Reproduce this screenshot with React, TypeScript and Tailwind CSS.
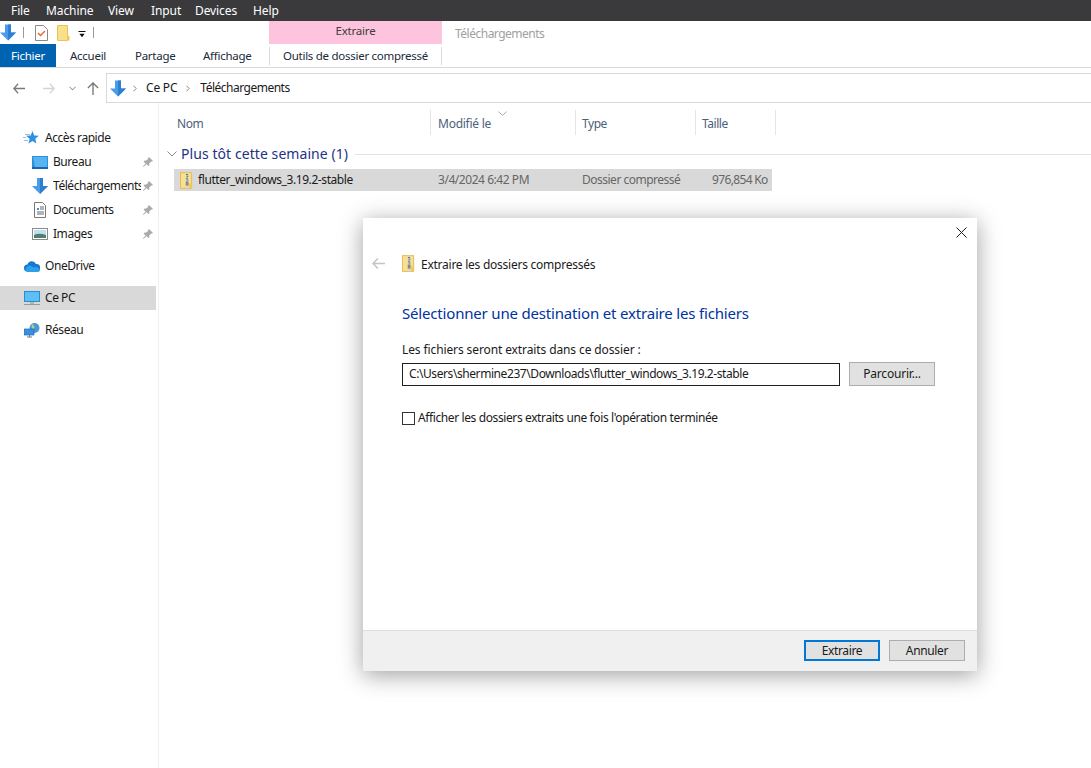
import React from "react";

const ArrowDown = ({ className = "" }: { className?: string }) => (
  <svg viewBox="0 0 16 16" className={className}>
    <path d="M5 0h6v8h5l-8 8-8-8h5z" fill="#4a9ce8" />
    <path d="M8 0h3v8h5l-8 8z" fill="#2f7fd0" />
  </svg>
);

const Zip = ({ className = "" }: { className?: string }) => (
  <svg viewBox="0 0 14 18" className={className}>
    <path d="M0.5 0.5h12v17h-12z" fill="#fbe08c" stroke="#e2b84a" />
    <path d="M10 12h3v5.5h-3z" fill="#f2c94c" />
    <rect x="6" y="0.5" width="3.5" height="17" fill="#d8d8d0" />
    <path d="M6.5 2h2v1h-2zM7 4h2v1H7zM6.5 6h2v1h-2zM7 8h2v1H7z" fill="#666" />
    <rect x="6.2" y="10" width="3" height="4.5" fill="#888" />
  </svg>
);

const Pin = () => (
  <svg viewBox="0 0 12 12" className="w-[12px] h-[12px]">
    <path d="M7 1l4 4-1 .6-.8-.2L7.2 7.6l.2 1.600-.9.8-2-2L1.500 11 1 10.500l2.600-3-2-2 .8-.9 1.600.2L6.200 2.800 6 2z" fill="#a9a9a9" />
  </svg>
);

const NavRow = ({
  icon,
  label,
  pin,
  indent,
  selected,
  mt,
}: {
  icon: React.ReactNode;
  label: string;
  pin?: boolean;
  indent?: boolean;
  selected?: boolean;
  mt?: boolean;
}) => (
  <div className={`h-[24px] w-[156px] flex items-center ${selected ? "bg-[#d9d9d9]" : ""} ${mt ? "mt-[8px]" : ""} ${indent ? "pl-[32px]" : "pl-[24px]"}`}>
    <span className="w-[16px] h-[16px] flex items-center justify-center shrink-0">{icon}</span>
    <span className={`ml-[5px] text-[12px] text-[#1a1a1a] whitespace-nowrap ${indent ? "w-[88px] [clip-path:inset(0)]" : ""}`}>{label}</span>
    {pin && <span className="ml-auto mr-[2px] flex"><Pin /></span>}
  </div>
);

const HeaderCell = ({ label, w, chevron }: { label: string; w: string; chevron?: boolean }) => (
  <div className={`${w} h-[25px] border-r border-[#e5e5e5] flex items-center text-[12px] text-[#4c607a] relative pt-[2px]`}>
    {chevron && (
      <svg viewBox="0 0 10 5" className="absolute left-[67px] top-[1px] w-[9px] h-[5px]">
        <path d="M0.500 0.500L5 4.500 9.500 0.500" fill="none" stroke="#9aa3ad" />
      </svg>
    )}
    {label}
  </div>
);

export default function App() {
  return (
    <div className="relative w-[1091px] h-[768px] overflow-hidden bg-white font-['Noto_Sans','Open_Sans',sans-serif] tracking-[-0.45px]">
      {/* VM menu */}
      <div className="h-[21px] bg-[#3a3a3c] flex items-center pl-[11px] text-[12px] text-white tracking-[-0.1px]">
        <span className="w-[35px]">File</span>
        <span className="w-[62px]">Machine</span>
        <span className="w-[43px]">View</span>
        <span className="w-[44px]">Input</span>
        <span className="w-[58px]">Devices</span>
        <span>Help</span>
      </div>

      {/* Quick access */}
      <div className="h-[23px] flex items-center">
        <div className="w-[269px] flex items-center h-full">
          <ArrowDown className="w-[16px] h-[17px] ml-[0px]" />
          <span className="ml-[7px] w-px h-[11px] bg-[#9a9a9a]" />
          <svg viewBox="0 0 13 16" className="ml-[11px] w-[13px] h-[16px]">
            <path d="M.5.500h8l4 4v11H.5z" fill="#fff" stroke="#8a8a8a" />
            <path d="M3 8l2.500 2.500L10 6" fill="none" stroke="#e8622c" strokeWidth="1.300" />
          </svg>
          <svg viewBox="0 0 13 16" className="ml-[9px] w-[13px] h-[16px]">
            <path d="M.5.500h10v15H.5z" fill="#fbe08c" stroke="#e8c35a" />
            <path d="M10.500 11h2v4.500h-2z" fill="#f2c94c" />
          </svg>
          <svg viewBox="0 0 8 8" className="ml-[8px] mt-[3px] w-[8px] h-[7px]">
            <path d="M0 0h8v1H0zM1 3h6L4 7z" fill="#111" />
          </svg>
          <span className="ml-[7px] w-px h-[11px] bg-[#9a9a9a]" />
        </div>
        <div className="w-[173px] h-full bg-[#fec4dd] flex justify-center pt-[2px] text-[11.500px] leading-[16px] text-[#3c3c3c] tracking-[-0.2px]">Extraire</div>
        <div className="ml-[13px] text-[12px] text-[#a0a0a0] mt-[2px] tracking-[-0.5px]">Téléchargements</div>
      </div>

      {/* Ribbon tabs */}
      <div className="h-[24px] flex border-b border-[#dadada] text-[11.500px] text-[#202a3a] tracking-[-0.27px]">
        <div className="w-[56px] h-[23px] bg-[#0063b1] text-white flex items-center justify-center">Fichier</div>
        <div className="w-[213px] h-[23px] flex items-center">
          <span className="ml-[14px] w-[65px]">Accueil</span>
          <span className="w-[68px]">Partage</span>
          <span>Affichage</span>
        </div>
        <div className="w-[173px] h-[18px] border-x border-[#d9d9d9] pl-[13px] flex items-center mt-[3px]">
          <span>Outils de dossier compressé</span>
        </div>
      </div>

      {/* Nav row */}
      <div className="h-[35px] flex">
        <div className="w-[106px] flex items-center pt-[5px]">
          <svg viewBox="0 0 14 12" className="ml-[13px] w-[12px] h-[11px]">
            <path d="M6 .5L1 6l5 5.500M1.500 6H14" fill="none" stroke="#7a7a7a" strokeWidth="1.500" />
          </svg>
          <svg viewBox="0 0 14 12" className="ml-[18px] w-[12px] h-[11px]">
            <path d="M8 .5L13 6l-5 5.500M12.500 6H0" fill="none" stroke="#d4d4d4" strokeWidth="1.500" />
          </svg>
          <svg viewBox="0 0 8 5" className="ml-[14px] w-[7px] h-[5px]">
            <path d="M.5.500L4 4 7.500.500" fill="none" stroke="#9a9a9a" strokeWidth="1.200" />
          </svg>
          <svg viewBox="0 0 12 14" className="ml-[11px] w-[12px] h-[13px]">
            <path d="M.5 6.500L6 1l5.500 5.500M6 1.500V14" fill="none" stroke="#7a7a7a" strokeWidth="1.500" />
          </svg>
        </div>
        <div className="flex-1 h-[30px] mt-[5px] border-y border-l border-[#d9d9d9] flex items-center text-[12px] text-[#1a1a1a]">
          <ArrowDown className="ml-[3px] w-[16px] h-[17px]" />
          <svg viewBox="0 0 5 8" className="ml-[7px] w-[4px] h-[7px]">
            <path d="M.5.500L4 4 .5 7.500" fill="none" stroke="#808080" strokeWidth="1.200" />
          </svg>
          <span className="ml-[9px] tracking-[-0.2px]">Ce PC</span>
          <svg viewBox="0 0 5 8" className="ml-[9px] w-[4px] h-[7px]">
            <path d="M.5.500L4 4 .5 7.500" fill="none" stroke="#808080" strokeWidth="1.200" />
          </svg>
          <span className="ml-[10px] tracking-[-0.5px]">Téléchargements</span>
        </div>
      </div>

      {/* Main */}
      <div className="flex h-[665px]">
        <aside className="w-[159px] border-r border-[#f0f0f0] pt-[23px] shrink-0">
          <NavRow
            label="Accès rapide"
            icon={
              <svg viewBox="0 0 16 16" className="w-[16px] h-[16px] -ml-[2px]">
                <path d="M9.500 1l1.700 4.400 4.600.4-3.500 3 1.100 4.700L9.500 11l-4 2.500 1.100-4.700-3.500-3 4.600-.4z" fill="#2f8fe0" />
                <path d="M2 4.500h5M0 7.500h3M1 10.500h4" stroke="#8cc4f0" />
              </svg>
            }
          />
          <NavRow
            indent
            pin
            label="Bureau"
            icon={
              <svg viewBox="0 0 16 13" className="w-[16px] h-[13px]">
                <rect width="16" height="13" fill="#2a90e0" />
                <path d="M1 1h14v10H3z" fill="#58b4f0" />
                <rect y="11" width="16" height="2" fill="#1666b0" />
              </svg>
            }
          />
          <NavRow indent pin label="Téléchargements" icon={<ArrowDown className="w-[16px] h-[16px]" />} />
          <NavRow
            indent
            pin
            label="Documents"
            icon={
              <svg viewBox="0 0 12 16" className="w-[12px] h-[16px]">
                <path d="M.5.500h8l3 3v12H.5z" fill="#fff" stroke="#777" />
                <path d="M3 6h2v2H3z" fill="#3a8ee6" />
                <path d="M6 5h4M6 7h4M3 10h7M3 12h7" stroke="#666" />
              </svg>
            }
          />
          <NavRow
            indent
            pin
            label="Images"
            icon={
              <svg viewBox="0 0 16 12" className="w-[16px] h-[12px]">
                <rect x=".5" y=".5" width="15" height="11" fill="#fff" stroke="#8a8a8a" />
                <rect x="2" y="2" width="12" height="5" fill="#bfe0f2" />
                <path d="M2 7c4-2 8-1 12 0v3H2z" fill="#4f7f6f" />
              </svg>
            }
          />
          <NavRow
            mt
            label="OneDrive"
            icon={
              <svg viewBox="0 0 16 11" className="w-[16px] h-[11px]">
                <path d="M3.500 10.500a3.500 3.500 0 010-7A4.500 4.500 0 0112 3a3.500 3.500 0 011 7.500z" fill="#1578d0" />
                <path d="M3 11a3 3 0 010-5c1.500-2 3.500-2 5-.5l2 1c2-1 5 0 6 2.500 0 1-1 2-2.500 2z" fill="#2ea0ea" />
              </svg>
            }
          />
          <NavRow
            mt
            selected
            label="Ce PC"
            icon={
              <svg viewBox="0 0 16 15" className="w-[16px] h-[15px]">
                <rect x=".5" y=".5" width="15" height="10" fill="#5cc0f5" stroke="#2a8cd0" />
                <rect x="6" y="11" width="4" height="2" fill="#b5b5b5" />
                <rect y="13" width="16" height="1" fill="#9a9a9a" />
              </svg>
            }
          />
          <NavRow
            mt
            label="Réseau"
            icon={
              <svg viewBox="0 0 16 15" className="w-[16px] h-[15px]">
                <circle cx="10.500" cy="5" r="5" fill="#4a9ad6" />
                <path d="M8 1c2 1 3 3 2 5-2 0-3-2-2-5z" fill="#a8d68a" />
                <rect x="0" y="6" width="10" height="6" fill="#3a8ee0" stroke="#2a6ea8" strokeWidth=".7" />
                <path d="M3 14h5M5.500 12v2" stroke="#777" />
              </svg>
            }
          />
        </aside>

        <main className="flex-1 pt-[7px]">
          <div className="flex">
            <HeaderCell label="Nom" w="w-[272px] pl-[18px]" />
            <HeaderCell label="Modifié le" w="w-[145px] pl-[7px] tracking-[-0.25px]" chevron />
            <HeaderCell label="Type" w="w-[120px] pl-[6px]" />
            <HeaderCell label="Taille" w="w-[80px] pl-[6px]" />
          </div>
          <div className="h-[24px] mt-[7px] flex items-center pl-[8px]">
            <svg viewBox="0 0 10 6" className="w-[10px] h-[6px]">
              <path d="M.5.500L5 5 9.500.500" fill="none" stroke="#8a8a8a" />
            </svg>
            <span className="ml-[4px] text-[14px] leading-[20px] text-[#1e3287] whitespace-nowrap tracking-[0.07px]">Plus tôt cette semaine (1)</span>
            <span className="ml-[7px] flex-1 h-px bg-[#e3e3e3]" />
          </div>
          <div className="mt-[3px] ml-[15px] w-[598px] h-[22px] bg-[#d9d9d9] flex items-center text-[12px] text-[#666]">
            <Zip className="ml-[6px] w-[13px] h-[17px]" />
            <span className="ml-[5px] w-[240px] text-[#1a1a1a] tracking-[-0.42px]">flutter_windows_3.19.2-stable</span>
            <span className="w-[144px]">3/4/2024 6:42 PM</span>
            <span className="w-[130px] whitespace-nowrap tracking-[-0.5px]">Dossier compressé</span>
            <span className="tracking-[-0.65px]">976,854 Ko</span>
          </div>
        </main>
      </div>

      {/* Dialog */}
      <div className="absolute left-[363px] top-[218px] w-[614px] h-[453px] bg-white flex flex-col shadow-[0_4px_22px_rgba(0,0,0,0.38)] text-[12px] text-[#1a1a1a] tracking-[-0.4px]">
        <div className="flex-1 relative flex flex-col">
          <svg viewBox="0 0 11 11" className="absolute right-[10px] top-[9px] w-[11px] h-[11px]">
            <path d="M.5.500l10 10M10.500.500l-10 10" stroke="#1a1a1a" strokeWidth="1" />
          </svg>
          <div className="mt-[37px] flex items-center h-[17px]">
            <svg viewBox="0 0 13 11" className="ml-[9px] w-[13px] h-[11px]">
              <path d="M6 .5L1 5.500l5 5M1.500 5.500H13" fill="none" stroke="#c4c4c4" strokeWidth="1.500" />
            </svg>
            <Zip className="ml-[17px] w-[13px] h-[17px]" />
            <span className="ml-[6px] pt-[2px] tracking-[-0.25px]">Extraire les dossiers compressés</span>
          </div>
          <h1 className="ml-[39px] mt-[30px] text-[15px] leading-[22px] font-normal text-[#0033a0] tracking-[-0.18px]">Sélectionner une destination et extraire les fichiers</h1>
          <div className="ml-[39px] mt-[17px] leading-[18px] tracking-[-0.11px]">Les fichiers seront extraits dans ce dossier :</div>
          <div className="ml-[39px] mt-[3px] flex items-center">
            <div className="w-[438px] h-[23px] border border-[#1f1f1f] pl-[6px] flex items-center whitespace-nowrap tracking-[-0.42px]">C:\Users\shermine237\Downloads\flutter_windows_3.19.2-stable</div>
            <div className="ml-[9px] w-[86px] h-[24px] border border-[#adadad] bg-[#e1e1e1] flex items-center justify-center tracking-[-0.2px]">Parcourir...</div>
          </div>
          <div className="ml-[39px] mt-[23px] flex items-center">
            <span className="w-[13px] h-[13px] border border-[#333] bg-white" />
            <span className="ml-[3px] tracking-[-0.39px]">Afficher les dossiers extraits une fois l'opération terminée</span>
          </div>
        </div>
        <div className="h-[41px] bg-[#f0f0f0] border-t border-[#dfdfdf] flex items-center justify-end pr-[12px] gap-[9px] pb-[1px] tracking-[-0.35px]">
          <div className="w-[76px] h-[21px] border-2 border-[#0078d7] bg-[#e1e1e1] flex items-center justify-center">Extraire</div>
          <div className="w-[76px] h-[21px] border border-[#adadad] bg-[#e1e1e1] flex items-center justify-center">Annuler</div>
        </div>
      </div>
    </div>
  );
}
